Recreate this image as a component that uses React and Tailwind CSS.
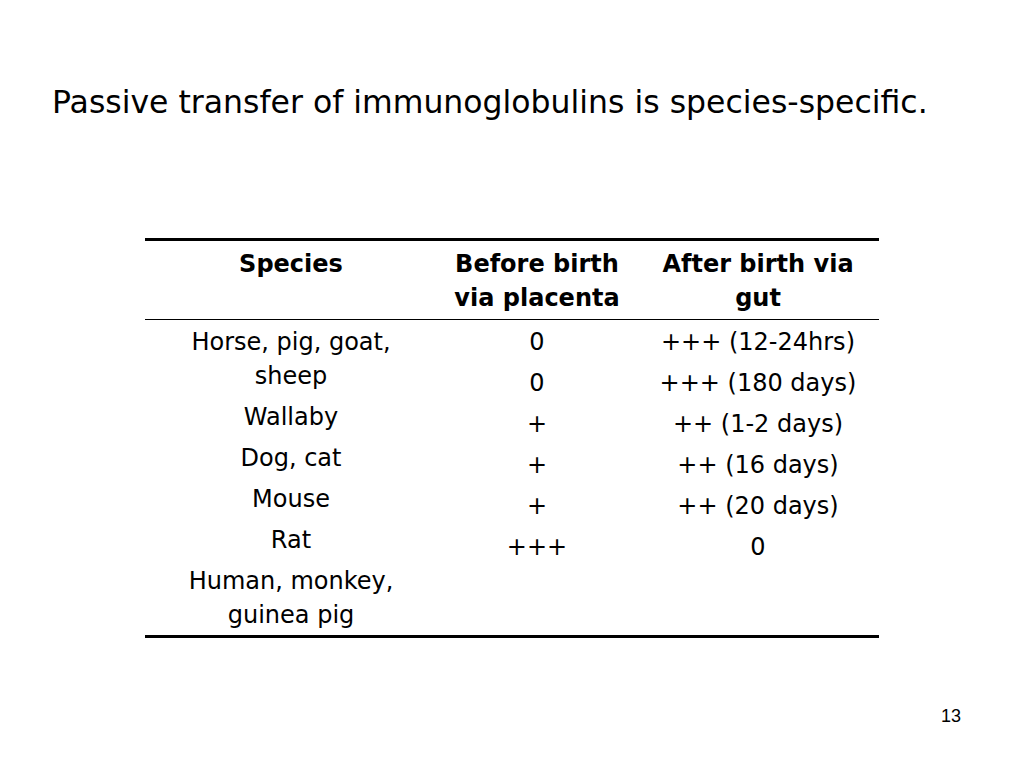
const rows = [
  { species: ["Horse, pig, goat,", "sheep"] },
  { species: ["Wallaby"] },
  { species: ["Dog, cat"] },
  { species: ["Mouse"] },
  { species: ["Rat"] },
  { species: ["Human, monkey,", "guinea pig"] },
];

const before = ["0", "0", "+", "+", "+", "+++"];
const after = ["+++ (12-24hrs)", "+++ (180 days)", "++ (1-2 days)", "++ (16 days)", "++ (20 days)", "0"];

export default function App() {
  return (
    <div className="relative w-[1024px] h-[768px] bg-white text-black overflow-hidden" style={{ fontFamily: '"DejaVu Sans", sans-serif' }}>
      <h1 className="pt-[82px] pl-[52px] text-[31.5px] leading-[40px] whitespace-nowrap">
        Passive transfer of immunoglobulins is species-specific.
      </h1>

      <div className="ml-[145px] mt-[116px] w-[734px] border-t-[3px] border-b-[3px] border-black text-[24px]">
        <div className="grid grid-cols-[292px_200px_242px] border-b border-black pt-[6px] pb-[4px] font-bold leading-[34px] text-center">
          <div>Species</div>
          <div>Before birth<br />via placenta</div>
          <div>After birth via<br />gut</div>
        </div>
        <div className="grid grid-cols-[292px_200px_242px] pt-[5px] pb-[3px] leading-[34px] text-center">
          <div className="flex flex-col gap-[7px]">
            {rows.map((r) => (
              <div key={r.species[0]}>
                {r.species.map((l) => (
                  <div key={l}>{l}</div>
                ))}
              </div>
            ))}
          </div>
          <div className="flex flex-col gap-[7px]">
            {before.map((v, i) => (
              <div key={i}>{v}</div>
            ))}
          </div>
          <div className="flex flex-col gap-[7px]">
            {after.map((v) => (
              <div key={v}>{v}</div>
            ))}
          </div>
        </div>
      </div>

      <div className="absolute left-[941px] top-[704px] text-[18px] leading-[24px]" style={{ fontFamily: '"Liberation Sans", sans-serif' }}>
        13
      </div>
    </div>
  );
}
